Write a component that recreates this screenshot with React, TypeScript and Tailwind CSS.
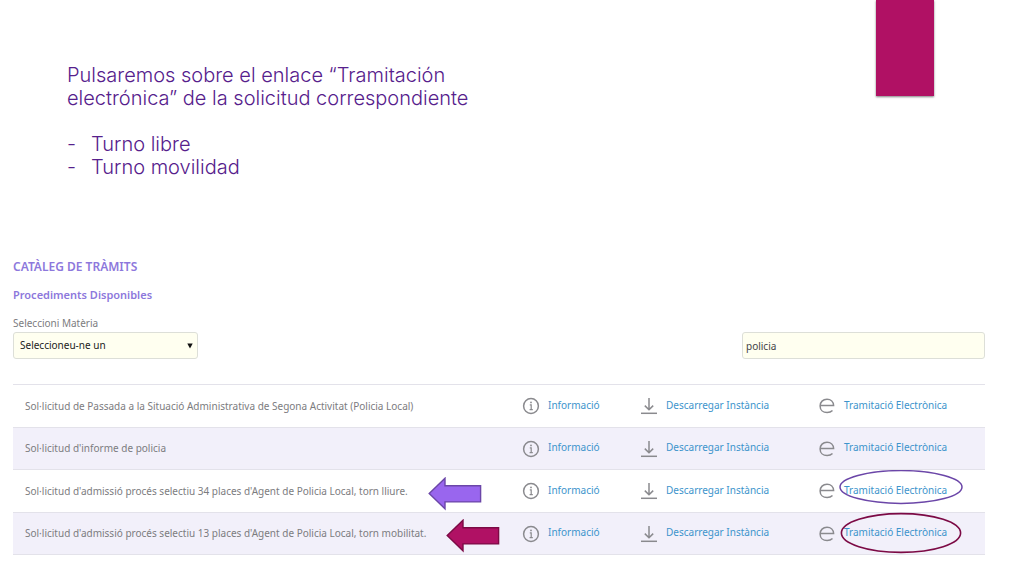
import type { ReactNode } from "react";

type Mark = "violet" | "crimson";

type Procedure = {
  title: string;
  mark?: Mark;
};

const procedures: Procedure[] = [
  { title: "Sol·licitud de Passada a la Situació Administrativa de Segona Activitat (Policia Local)" },
  { title: "Sol·licitud d'informe de policia" },
  { title: "Sol·licitud d'admissió procés selectiu 34 places d'Agent de Policia Local, torn lliure.", mark: "violet" },
  { title: "Sol·licitud d'admissió procés selectiu 13 places d'Agent de Policia Local, torn mobilitat.", mark: "crimson" },
];

function InfoIcon() {
  return (
    <svg width="18" height="18" viewBox="0 0 18 18" fill="none" stroke="#8a8a8e" aria-hidden="true">
      <circle cx="9" cy="9" r="7.4" strokeWidth="1.5" />
      <path d="M7.8 7.9H9.2V12.6M7.6 12.7H10.8" strokeWidth="1.2" />
      <circle cx="9" cy="5.4" r="0.9" fill="#8a8a8e" stroke="none" />
    </svg>
  );
}

function DownloadIcon() {
  return (
    <svg width="18" height="18" viewBox="0 0 18 18" fill="none" stroke="#8a8a8e" strokeWidth="1.5" aria-hidden="true">
      <path d="M9 1V12.6M4.8 8.6L9 12.8L13.2 8.6" />
      <path d="M1 16.3H17" />
    </svg>
  );
}

function ElectronicIcon() {
  return (
    <svg width="18" height="18" viewBox="0 0 18 18" fill="none" stroke="#8a8a8e" strokeWidth="1.5" aria-hidden="true">
      <path d="M2.2 8.6H15.6C15.6 4.7 12.8 2.2 9 2.2C5 2.2 2.1 5 2.1 8.9C2.1 12.8 5 15.5 9.1 15.5C11.4 15.5 13.2 14.8 14.5 13.5" />
    </svg>
  );
}

function Arrow({ mark }: { mark: Mark }) {
  const violet = mark === "violet";
  return (
    <svg
      className="absolute left-full top-1/2 ml-5 -mt-[14px]"
      width="54"
      height="34"
      viewBox="0 0 54 34"
      aria-hidden="true"
    >
      <path
        d="M1.2 16.5L17 1.2V8.7H52.6V24.9H17V31.8Z"
        fill={violet ? "#9966ee" : "#b01164"}
        stroke={violet ? "#6b46a8" : "#7c0a45"}
        strokeWidth="1.4"
      />
    </svg>
  );
}

function Ring({ mark }: { mark: Mark }) {
  return mark === "violet" ? (
    <svg className="pointer-events-none absolute -left-[5px] -top-3" width="124" height="36" viewBox="0 0 124 36" aria-hidden="true">
      <ellipse cx="62" cy="17" rx="61" ry="16.4" fill="none" stroke="#6b46a8" strokeWidth="1.5" />
    </svg>
  ) : (
    <svg className="pointer-events-none absolute -left-[4px] -top-3" width="122" height="42" viewBox="0 0 122 42" aria-hidden="true">
      <ellipse cx="61" cy="21" rx="59.6" ry="19.4" fill="none" stroke="#7c0a45" strokeWidth="1.6" />
    </svg>
  );
}

function Action({ icon, label, mark }: { icon: ReactNode; label: string; mark?: Mark }) {
  return (
    <a href="#" className="flex items-center gap-2 whitespace-nowrap text-[#3d94cc]">
      {icon}
      <span className="relative -mt-[3px] leading-4">
        {label}
        {mark && <Ring mark={mark} />}
      </span>
    </a>
  );
}

export default function App() {
  return (
    <main className="min-h-screen bg-white font-['Noto_Sans','Open_Sans',sans-serif] text-[10px] text-[#7c7c80]">
      <header className="flex items-start justify-between pl-[67px] pr-[90px]">
        <div className="pt-16 font-['Century_Gothic','Inter',sans-serif] text-[20px] font-light leading-[23px] text-[#56208c]">
          <p>
            Pulsaremos sobre el enlace “Tramitación
            <br />
            electrónica” de la solicitud correspondiente
          </p>
          <ul className="mt-[23px]">
            <li className="flex">
              <span className="w-6">-</span>Turno libre
            </li>
            <li className="flex">
              <span className="w-6">-</span>Turno movilidad
            </li>
          </ul>
        </div>
        <div className="h-24 w-[58px] bg-[#b01164] shadow-[0_1px_2px_rgba(0,0,0,0.5)]" />
      </header>

      <section className="mt-20 pl-[13px] pr-[39px]">
        <h1 className="text-[12px] font-semibold leading-4 text-[#8d78dc]">CATÀLEG DE TRÀMITS</h1>
        <h2 className="mt-3 text-[11px] font-semibold leading-4 text-[#8d78dc]">Procediments Disponibles</h2>

        <form className="mt-3 flex items-end justify-between">
          <div className="flex flex-col">
            <label htmlFor="materia" className="mb-px leading-4">
              Seleccioni Matèria
            </label>
            <div className="relative">
              <select
                id="materia"
                className="h-[27px] w-[185px] appearance-none rounded-[3px] border border-[#dddfd8] bg-[#fffff0] pl-[6px] text-[10px] text-[#222222]"
              >
                <option>Seleccioneu-ne un</option>
              </select>
              <svg className="pointer-events-none absolute right-[5px] top-[11px]" width="6" height="6" viewBox="0 0 6 6" aria-hidden="true">
                <path d="M0.3 0.4H5.7L3 5.6Z" fill="#111111" />
              </svg>
            </div>
          </div>
          <input
            type="text"
            aria-label="Cerca"
            defaultValue="policia"
            className="h-[27px] w-[243px] rounded-[3px] border border-[#dddfd8] bg-[#fffff0] pl-[3px] text-[10px] text-[#444448]"
          />
        </form>

        <table className="mt-[25px] w-full table-fixed border-collapse border-b border-[#e3e2ea]">
          <colgroup>
            <col />
            <col className="w-[118px]" />
            <col className="w-[178px]" />
            <col className="w-[167px]" />
          </colgroup>
          <tbody>
            {procedures.map((p) => (
              <tr key={p.title} className="h-[43px] border-t border-[#e3e2ea] even:h-[42px] even:bg-[#f2f0fa]">
                <td className="py-0 pl-3">
                  <span className="relative whitespace-nowrap">
                    {p.title}
                    {p.mark && <Arrow mark={p.mark} />}
                  </span>
                </td>
                <td className="p-0">
                  <Action icon={<InfoIcon />} label="Informació" />
                </td>
                <td className="p-0">
                  <Action icon={<DownloadIcon />} label="Descarregar Instància" />
                </td>
                <td className="p-0">
                  <Action icon={<ElectronicIcon />} label="Tramitació Electrònica" mark={p.mark} />
                </td>
              </tr>
            ))}
          </tbody>
        </table>
      </section>
    </main>
  );
}
